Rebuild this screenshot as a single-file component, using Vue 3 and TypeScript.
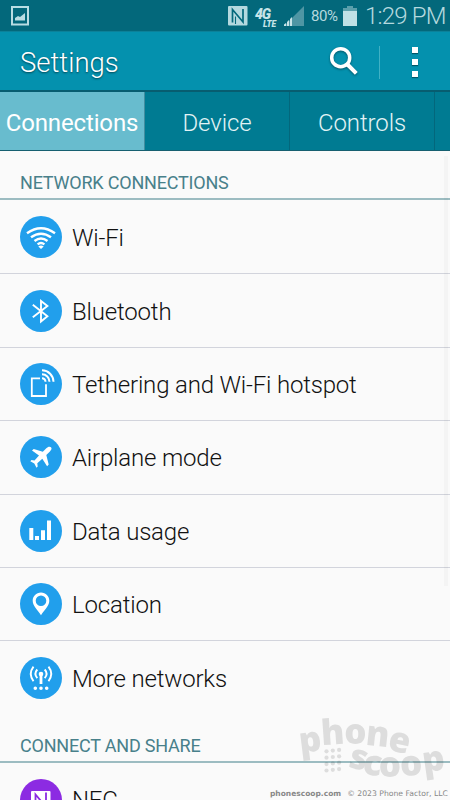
<script setup lang="ts">
interface Tab { label: string; active?: boolean }
interface Item { id: string; label: string }
interface Glyph { ch: string; x: number; y: number; angle: number }

const tabs: Tab[] = [
  { label: 'Connections', active: true },
  { label: 'Device' },
  { label: 'Controls' },
  { label: '' },
]

const items: Item[] = [
  { id: 'wifi', label: 'Wi-Fi' },
  { id: 'bluetooth', label: 'Bluetooth' },
  { id: 'tethering', label: 'Tethering and Wi-Fi hotspot' },
  { id: 'airplane', label: 'Airplane mode' },
  { id: 'data', label: 'Data usage' },
  { id: 'location', label: 'Location' },
  { id: 'more', label: 'More networks' },
]

const glyphs: Glyph[] = [
  { ch: 'p', x: 12.5, y: 42.5, angle: -7 },
  { ch: 'h', x: 34.5, y: 35.5, angle: -4 },
  { ch: 'o', x: 56.5, y: 34.5, angle: 0 },
  { ch: 'n', x: 77.5, y: 37, angle: 6 },
  { ch: 'e', x: 98, y: 43, angle: 12 },
  { ch: 's', x: 57, y: 60, angle: 14 },
  { ch: 'c', x: 72, y: 66, angle: 8 },
  { ch: 'o', x: 91, y: 67.500, angle: 0 },
  { ch: 'o', x: 113, y: 66.500, angle: -4 },
  { ch: 'p', x: 136, y: 62, angle: -8 },
]

const dots = [0, 1, 2, 3].flatMap((r) => [0, 1, 2].map((c) => ({ x: 27.5 + c * 6.3, y: 41.3 + r * 6.4 - c * 0.7 })))
</script>

<template>
  <div class="screen">
    <div class="status">
      <svg class="shot" width="19" height="20" viewBox="0 0 19 20">
        <rect x="2" y="1" width="16" height="17.500" fill="none" stroke="#b9dde3" stroke-width="2" />
        <path d="M5 14.500V12l3-2 2 1 5-4v7.500z" fill="#b9dde3" />
      </svg>
      <svg class="nfc" width="20" height="20" viewBox="0 0 20 20">
        <rect x="0" y="0" width="19.500" height="19.500" rx="1" fill="#b4d9df" />
        <path d="M4.500 16.500V3.500L15 16V3" fill="none" stroke="#03687b" stroke-width="1.700" />
        <path d="M7.500 18V10.500" fill="none" stroke="#03687b" stroke-width="1.100" />
      </svg>
      <div class="lte"><span class="g4">4G</span><span class="lt">LTE</span></div>
      <svg class="signal" width="20" height="20" viewBox="0 0 20 20">
        <path d="M0 20L20 0V20z" fill="#4f96a4" />
        <path d="M0 20v-1.500l2-1.500v3zM3 20v-4l2-2v6zM6 20v-7l2-2v9z" fill="#c7e4e8" />
      </svg>
      <span class="percent">80%</span>
      <svg class="battery" width="14" height="20" viewBox="0 0 14 20">
        <path d="M4 0h6v2h4v4H0V2h4z" fill="#5b9fab" />
        <path d="M0 5h14v15H0z" fill="#bfe0e5" />
      </svg>
      <span class="time">1:29 PM</span>
    </div>

    <header class="appbar">
      <h1>Settings</h1>
      <svg class="search" width="30" height="30" viewBox="0 0 30 30">
        <circle cx="11.700" cy="11.700" r="9" fill="none" stroke="#fff" stroke-width="3.500" />
        <path d="M18 18l9.300 9.300" stroke="#fff" stroke-width="4" />
      </svg>
      <i class="separator"></i>
      <div class="overflow"><i></i><i></i><i></i></div>
    </header>

    <nav class="tabs">
      <div v-for="(t, i) in tabs" :key="i" class="tab" :class="{ active: t.active }">{{ t.label }}</div>
    </nav>

    <main class="list">
      <h2 class="section">NETWORK CONNECTIONS</h2>
      <div v-for="item in items" :key="item.id" class="row">
        <svg class="icon" width="42" height="42" viewBox="0 0 42 42">
          <circle cx="21" cy="21" r="21" fill="#219fec" />
          <g v-if="item.id === 'wifi'" fill="none" stroke="#fff" stroke-width="2.400">
            <path d="M7 17.300Q21 7.200 35 17.300M11 21.300Q21 14 31 21.300M14.500 25Q21 20 27.500 25M17.600 28.400Q21 25.800 24.400 28.400" />
            <path d="M18.300 30.500Q21 28.500 23.700 30.500L21 33z" fill="#fff" stroke="none" />
          </g>
          <path v-else-if="item.id === 'bluetooth'" d="M12.800 14.800L27.400 26.200 21 31.500V11l6.400 5L12.800 27.300" fill="none" stroke="#fff" stroke-width="1.900" />
          <g v-else-if="item.id === 'tethering'" fill="none" stroke="#fff">
            <path d="M20 15.300H11.800V33H26V21.200" stroke-width="1.800" />
            <path d="M22 15.300a3.500 3.500 0 0 1 3.500 3.500M22 11.300a7.500 7.500 0 0 1 7.500 7.500M22 7.300A11.500 11.500 0 0 1 33.500 18.800" stroke-width="2" />
          </g>
          <path v-else-if="item.id === 'airplane'" d="M31 11.300c-1.300-1.200-3.300-.5-4.700 1l-3.500 3.500L13.700 13 12 14.600l7 4.900-4.500 5-3-.4-1.200 1.200 4 2.200 2.200 4.200 1.200-1.200-.4-3.200 5-4.500 4.800 7.500 1.600-1.700-2.400-9.500 3.600-3.600c1.400-1.400 2.300-3.100 1.100-4.200z" fill="#fff" />
          <path v-else-if="item.id === 'data'" d="M9.300 18h4v12h-4zM15 26h4v4h-4zM21 20.300h4V30h-4zM27 10.500h4V30h-4z" fill="#fff" />
          <path v-else-if="item.id === 'location'" fill-rule="evenodd" d="M21 9.500c-4.800 0-8.300 3.700-8.300 8.200 0 5.500 5.100 9.200 8.300 14.500 3.200-5.300 8.300-9 8.300-14.500 0-4.500-3.500-8.200-8.300-8.200zm0 3a5.300 5.300 0 1 1 0 10.600 5.300 5.300 0 0 1 0-10.600z" fill="#fff" />
          <g v-else fill="none" stroke="#fff" stroke-width="1.900">
            <path d="M17.300 12.500q-3.800 4.300 0 8.600M24.700 12.500q3.800 4.300 0 8.600M13.500 9.700q-5.500 7.200 0 14.500M28.500 9.700q5.500 7.200 0 14.500" />
            <circle cx="21" cy="17" r="2.300" fill="#fff" stroke="none" />
            <path d="M21 17v10" stroke-width="2.800" />
            <path d="M15.300 31.300h0M21 31.300h0M26.700 31.300h0" stroke-width="3.600" stroke-linecap="round" />
          </g>
        </svg>
        <span class="label">{{ item.label }}</span>
      </div>
      <h2 class="section second">CONNECT AND SHARE</h2>
      <div class="row last">
        <svg class="icon" width="42" height="42" viewBox="0 0 42 42">
          <circle cx="21" cy="21" r="21" fill="#8c2be2" />
          <rect x="11" y="12" width="19.500" height="20" rx="1" fill="#fff" />
          <path d="M15.500 29V15.500L26 28V13.500" fill="none" stroke="#8c2be2" stroke-width="1.800" />
          <path d="M18.500 31V22.500" fill="none" stroke="#8c2be2" stroke-width="1.100" />
        </svg>
        <span class="label">NFC</span>
      </div>
    </main>

    <i class="scrollbar"></i>
    <svg class="watermark" width="150" height="75" viewBox="0 0 150 75">
      <g opacity=".13">
        <text v-for="(g, i) in glyphs" :key="i" :transform="`translate(${g.x} ${g.y}) rotate(${g.angle})`" text-anchor="middle" y="-1">{{ g.ch }}</text>
        <circle v-for="(d, i) in dots" :key="'d' + i" :cx="d.x" :cy="d.y" r="2.100" />
      </g>
    </svg>
    <footer class="credit"><b>phonescoop.com</b><span>© 2023 Phone Factor, LLC</span></footer>
  </div>
</template>

<style>
body { margin: 0; overflow: hidden; }
</style>

<style scoped>
.screen { position: relative; width: 450px; height: 800px; overflow: hidden; background: #fafafa; font-family: Roboto, "Liberation Sans", sans-serif; font-weight: 300; color: #111; }
svg { display: block; flex: none; }
h1, h2 { margin: 0; font-weight: 300; }
.status { box-sizing: border-box; height: 31px; display: flex; align-items: flex-start; padding: 6px 0 0 10px; background: #03687b; color: #b5d9df; white-space: nowrap; }
.nfc { margin-left: 199px; }
.lte { display: flex; flex-direction: column; width: 27px; height: 22px; margin-left: 7px; font: italic 900 14px/12px Roboto, sans-serif; color: #c7e4e8; padding-top: 2px; box-sizing: border-box; }
.g4 { letter-spacing: -1px; }
.lt { padding-left: 8px; font-size: 8.5px; line-height: 8px; letter-spacing: -.1px; }
.signal { margin-left: 2px; }
.percent { margin-left: 7px; width: 28px; font-size: 15px; line-height: 21px; font-weight: 400; letter-spacing: -.4px; }
.battery { margin-left: 4px; }
.time { margin-left: 8px; font-size: 24px; line-height: 21px; letter-spacing: -.8px; }
.appbar { height: 59px; display: flex; align-items: center; background: #0491ae; box-shadow: inset 0 1px #0c8199; }
h1 { width: 309px; padding-left: 20px; font-size: 27.5px; line-height: 32px; color: #fff; text-shadow: 0 1px 2px #0008; padding-top: 4px; }
.search { filter: drop-shadow(0 1px 1px #0006); margin-top: 1px; }
.separator { width: 1px; height: 33px; margin-left: 20px; background: #40b1c5; margin-top: 3px; }
.overflow { margin-left: 32px; display: grid; gap: 6px; margin-top: 3px; }
.overflow i { width: 6px; height: 6px; background: #fff; box-shadow: 0 1px 1px #0006; }
.tabs { box-sizing: border-box; height: 61px; display: flex; border-top: 2px solid #075d70; border-bottom: 1px solid #165f70; background: #007b92; }
.tab { box-sizing: border-box; flex: none; width: 145px; border-right: 1px solid #03677c; display: flex; align-items: center; justify-content: center; color: #e2f3f5; font-size: 24px; padding-top: 4px; letter-spacing: -.1px; }
.tab.active { background: #68bcce; color: #fff; font-weight: 400; border-right-color: #428ea0; letter-spacing: -.15px; }
.list { display: flex; flex-direction: column; }
.section { box-sizing: border-box; height: 49px; margin-bottom: 1px; padding: 21px 0 0 20px; border-bottom: 2px solid #9cbcc1; color: #48808a; font-size: 18px; line-height: 22px; font-weight: 400; letter-spacing: -.2px; }
.row { box-sizing: border-box; height: 73.4px; flex: none; padding-left: 20px; display: flex; align-items: center; gap: 10px; border-bottom: 1px solid #d2d4dc; }
.row:nth-child(8) { border-bottom: 0; }
.label { padding-top: 2px; font-size: 24px; line-height: 30px; white-space: nowrap; letter-spacing: -.18px; }
.section.second { padding-top: 20.5px; height: 48.5px; margin-bottom: 0; }
.row.last { padding-top: 2px; }
.row.last .label { line-height: 28px; padding-top: 0; }
.scrollbar { position: absolute; right: 2px; top: 156px; width: 4px; height: 430px; background: #00000006; }
.watermark { position: absolute; left: 299px; top: 710px; overflow: visible; font: 800 35px "Open Sans", sans-serif; fill: #222; }
.credit { position: absolute; left: 270px; bottom: 0; display: flex; gap: 6px; font: 400 7.7px/12px "DejaVu Sans", sans-serif; color: #888; white-space: nowrap; }
.credit b { font-size: 7.5px; }
</style>
